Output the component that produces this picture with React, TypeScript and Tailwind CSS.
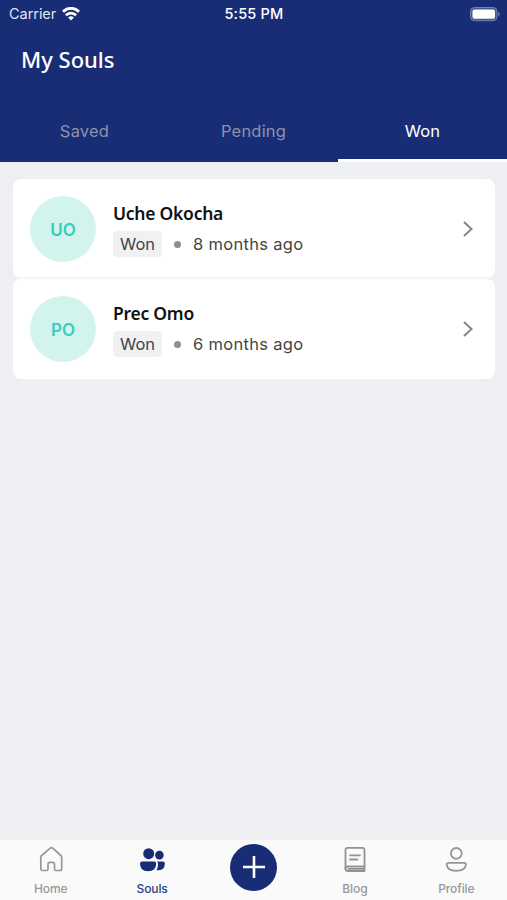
import React from "react";

type Soul = { initials: string; name: string; time: string };

const souls: Soul[] = [
  { initials: "UO", name: "Uche Okocha", time: "8 months ago" },
  { initials: "PO", name: "Prec Omo", time: "6 months ago" },
];

function StatusBar() {
  return (
    <div className="grid h-7 grid-cols-3 items-center pl-[9px] pr-[7px] text-[14.5px] leading-7 text-white">
      <div className="flex items-center gap-[6px]">
        <span className="tracking-[-0.05px] text-[#dfe3f2]">Carrier</span>
        <svg width="18" height="14" viewBox="0 0 18 14" fill="none" stroke="#fff" strokeWidth="2.8">
          <path d="M1 4.7a11.3 11.3 0 0 1 16 0" />
          <path d="M3.9 8.3a7.2 7.2 0 0 1 10.2 0" />
          <path d="M9 13.6 6.1 10.6a4.1 4.1 0 0 1 5.8 0Z" fill="#fff" stroke="none" />
        </svg>
      </div>
      <span className="-ml-px text-center font-medium tracking-[0.2px]">5:55 PM</span>
      <svg className="justify-self-end" width="31" height="15" viewBox="0 0 31 15">
        <rect x="1.500" y="0.500" width="26.500" height="13.200" rx="4" fill="#46568f" stroke="#7683b1" />
        <rect x="3.500" y="2.500" width="22.500" height="9.200" rx="2" fill="#fff" />
        <path d="M29.300 4.800c1.800.7 1.800 3.900 0 4.600Z" fill="#7683b1" />
      </svg>
    </div>
  );
}

function Tabs() {
  return (
    <div className="grid h-[61px] grid-cols-3 text-center text-[16.5px] leading-[61px] tracking-[0.2px] text-[#8a93a9]">
      <span>Saved</span>
      <span>Pending</span>
      <span className="h-[61px] border-b-[3px] border-white text-white">Won</span>
    </div>
  );
}

function SoulRow({ soul }: { soul: Soul }) {
  return (
    <li className="flex h-[100px] items-center rounded-lg bg-white pl-[17px] pr-[21px] pt-[2px] last:pt-0">
      <div className="flex size-[66px] shrink-0 items-center justify-center rounded-full bg-[#d3f4ec] pt-[2px] text-[17px] font-semibold text-[#38cbbd]">
        {soul.initials}
      </div>
      <div className="ml-[17px] flex-1">
        <h2 className="font-['Noto_Sans','Open_Sans',sans-serif] text-[17.5px] font-semibold leading-6 tracking-[-0.25px] text-[#111]">
          {soul.name}
        </h2>
        <div className="mt-[6px] flex items-center text-[16.5px] leading-[26px] text-[#444]">
          <span className="w-[49px] rounded bg-[#eff1f2] text-center">Won</span>
          <span className="ml-3 size-[7px] rounded-full bg-[#8d8d98]" />
          <span className="ml-3 tracking-[0.3px]">{soul.time}</span>
        </div>
      </div>
      <svg width="12" height="18" viewBox="0 0 12 18" fill="none" stroke="#85858f" strokeWidth="2">
        <path d="m2 2 7.5 7L2 16" />
      </svg>
    </li>
  );
}

function HomeIcon() {
  return (
    <svg width="28" height="28" viewBox="0 0 28 28" fill="none" stroke="#979797" strokeWidth="1.7" strokeLinejoin="round">
      <path d="M3.8 11.2c0-.7.3-1.3.8-1.7L13.300 2.200c.7-.6 1.700-.6 2.400 0l8.200 7.300c.5.400.8 1 .8 1.700v11.500c0 1-.8 1.800-1.800 1.800h-4.200c-.7 0-1.200-.5-1.200-1.200v-5.100c0-1-.8-1.800-1.800-1.800h-2.900c-1 0-1.800.8-1.800 1.800v5.100c0 .7-.5 1.200-1.200 1.200H5.600c-1 0-1.800-.8-1.800-1.800Z" />
    </svg>
  );
}

function SoulsIcon() {
  return (
    <svg width="28" height="28" viewBox="0 0 28 28" fill="#192d77">
      <circle cx="10.7" cy="7.7" r="5.5" />
      <circle cx="21.400" cy="9.100" r="4.300" />
      <path d="M4 15.600h12.200c1.200 0 1.900.8 1.900 2 0 4.900-2.600 7.700-8 7.700S2.100 22.500 2.100 17.600c0-1.200.7-2 1.900-2Z" />
      <path d="M19 15.600h5.900c1.200 0 1.900.8 1.900 2 0 4.400-2 6.700-6.300 6.700-.7 0-1.400-.1-2-.3 1-1.500 1.500-3.600 1.500-6 0-.8-.3-1.800-1-2.400Z" />
    </svg>
  );
}

function BlogIcon() {
  return (
    <svg width="28" height="28" viewBox="0 0 28 28" fill="none" stroke="#929292" strokeWidth="1.8" strokeLinecap="round" strokeLinejoin="round">
      <path d="M23.500 20.500V4.200c0-1.400-.9-2.300-2.300-2.300H6.800c-1.400 0-2.300.9-2.300 2.300v18.300c0 1.600 1 2.500 2.500 2.500h16" />
      <path d="M4.500 22.500c.1-1.200 1-2 2.300-2h16.700V25M7.500 22.800h15.500M9 9.300h10M9 13.500h7.500" />
    </svg>
  );
}

function ProfileIcon() {
  return (
    <svg width="28" height="28" viewBox="0 0 28 28" fill="none" stroke="#969696" strokeWidth="1.8">
      <circle cx="14.300" cy="7.400" r="5.400" />
      <path d="M6.300 16.900h16c1 0 1.700.7 1.600 1.700-.4 4-4.100 6.200-9.600 6.200s-9.200-2.200-9.600-6.200c-.1-1 .6-1.700 1.600-1.700Z" />
    </svg>
  );
}

function NavItem({ label, active, children }: { label: string; active?: boolean; children: React.ReactNode }) {
  return (
    <div className={`flex flex-col items-center pt-[6px] text-[12px] leading-4 ${active ? "text-[#2b3e86]" : "text-[#979797]"}`}>
      {children}
      <span className="mt-[7px] font-medium tracking-[-0.1px]">{label}</span>
    </div>
  );
}

export default function App() {
  return (
    <div className="flex h-[900px] w-full flex-col overflow-hidden bg-[#edeff2] font-['Inter','Liberation_Sans',sans-serif]">
      <header className="h-[162px] shrink-0 bg-[#192d77]">
        <StatusBar />
        <h1 className="h-[73px] pl-[21px] pt-[15px] font-['Noto_Sans','Open_Sans',sans-serif] text-[22px] font-medium leading-8 text-white">
          My Souls
        </h1>
        <Tabs />
      </header>
      <main className="flex-1 pl-[13px] pr-[12px] pt-[17.4px]">
        <ul className="divide-y-2 divide-[#f4f5f6]">
          {souls.map((soul) => (
            <SoulRow key={soul.name} soul={soul} />
          ))}
        </ul>
      </main>
      <nav className="grid h-[60px] shrink-0 grid-cols-5 bg-[#fafafa]">
        <NavItem label="Home"><HomeIcon /></NavItem>
        <NavItem label="Souls" active><SoulsIcon /></NavItem>
        <div className="flex justify-center pl-px pt-[3.5px]">
          <div className="flex size-[47px] items-center justify-center rounded-full bg-[#192d77]">
            <svg width="24" height="24" viewBox="0 0 24 24" fill="none" stroke="#fff" strokeWidth="2.600">
              <path d="M12 1v22M1 12h22" />
            </svg>
          </div>
        </div>
        <NavItem label="Blog"><BlogIcon /></NavItem>
        <NavItem label="Profile"><ProfileIcon /></NavItem>
      </nav>
    </div>
  );
}
